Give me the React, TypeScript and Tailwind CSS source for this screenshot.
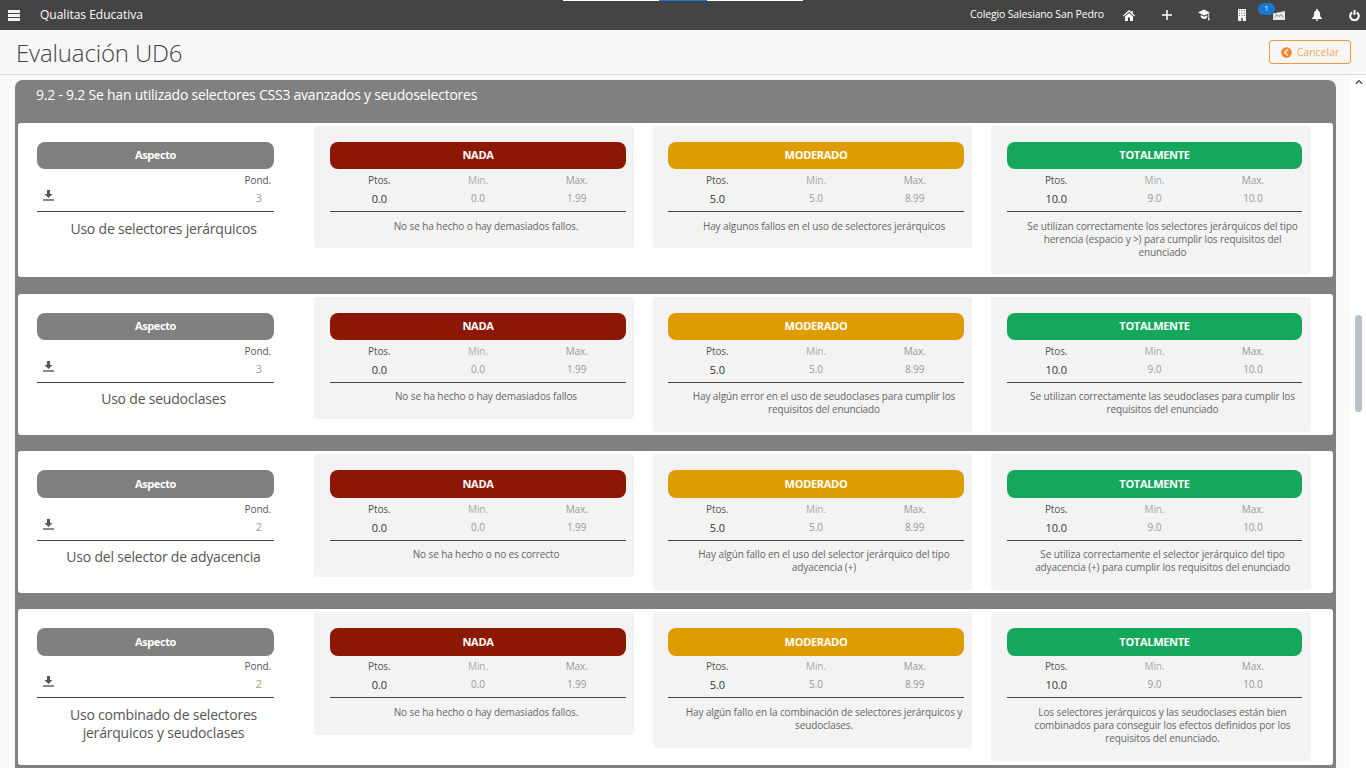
import { FaChevronCircleLeft, FaChevronUp } from "react-icons/fa";

type Level = { pts: string; min: string; max: string; text: string };

type Aspect = {
  name: string;
  pond: string;
  height: string;
  gap: string;
  bar: string;
  row: string;
  desc: string;
  cellPb: string;
  nada: Level;
  moderado: Level;
  totalmente: Level;
};

const nada = (text: string): Level => ({ pts: "0.0", min: "0.0", max: "1.99", text });
const moderado = (text: string): Level => ({ pts: "5.0", min: "5.0", max: "8.99", text });
const totalmente = (text: string): Level => ({ pts: "10.0", min: "9.0", max: "10.0", text });

const aspects: Aspect[] = [
  {
    name: "Uso de selectores jerárquicos",
    pond: "3",
    height: "h-[154px]",
    gap: "mb-[17px]",
    bar: "h-[27px]",
    row: "h-[43px]",
    desc: "mt-2",
    cellPb: "pb-[15px]",
    nada: nada("No se ha hecho o hay demasiados fallos."),
    moderado: moderado("Hay algunos fallos en el uso de selectores jerárquicos"),
    totalmente: totalmente(
      "Se utilizan correctamente los selectores jerárquicos del tipo herencia (espacio y >) para cumplir los requisitos del enunciado"
    ),
  },
  {
    name: "Uso de seudoclases",
    pond: "3",
    height: "h-[141px]",
    gap: "mb-4",
    bar: "h-[27px]",
    row: "h-[43px]",
    desc: "mt-[7px]",
    cellPb: "pb-4",
    nada: nada("No se ha hecho o hay demasiados fallos"),
    moderado: moderado("Hay algún error en el uso de seudoclases para cumplir los requisitos del enunciado"),
    totalmente: totalmente("Se utilizan correctamente las seudoclases para cumplir los requisitos del enunciado"),
  },
  {
    name: "Uso del selector de adyacencia",
    pond: "2",
    height: "h-[142px]",
    gap: "mb-4",
    bar: "h-[28px]",
    row: "h-[43px]",
    desc: "mt-[7px]",
    cellPb: "pb-4",
    nada: nada("No se ha hecho o no es correcto"),
    moderado: moderado("Hay algún fallo en el uso del selector jerárquico del tipo adyacencia (+)"),
    totalmente: totalmente(
      "Se utiliza correctamente el selector jerárquico del tipo adyacencia (+) para cumplir los requisitos del enunciado"
    ),
  },
  {
    name: "Uso combinado de selectores jerárquicos y seudoclases",
    pond: "2",
    height: "h-[156px]",
    gap: "mb-0",
    bar: "h-[28px] -mb-px",
    row: "h-[43px]",
    desc: "mt-2",
    cellPb: "pb-4",
    nada: nada("No se ha hecho o hay demasiados fallos."),
    moderado: moderado("Hay algún fallo en la combinación de selectores jerárquicos y seudoclases."),
    totalmente: totalmente(
      "Los selectores jerárquicos y las seudoclases están bien combinados para conseguir los efectos definidos por los requisitos del enunciado."
    ),
  },
];

function MenuIcon() {
  return (
    <svg viewBox="0 0 12 11" className="w-3 h-[11px]" fill="#f2f2f2">
      <rect width="12" height="3" />
      <rect y="4" width="12" height="3" />
      <rect y="8" width="12" height="3" />
    </svg>
  );
}

function HomeIcon() {
  return (
    <svg viewBox="0 0 12 11" className="w-3 h-[11px]" fill="#fff">
      <path d="M6 0l2.2 2V1h1.6v2.6L12 5.6l-.7.8L6 1.7.7 6.4 0 5.6z" />
      <path d="M2 6.4L6 3l4 3.4V11H7V7.5H5V11H2z" />
    </svg>
  );
}

function PlusIcon() {
  return (
    <svg viewBox="0 0 10 10" className="w-[10px] h-[10px]" fill="#fff">
      <path d="M4.250 0h1.500v4.250H10v1.500H5.750V10h-1.500V5.750H0v-1.500h4.250z" />
    </svg>
  );
}

function CapIcon() {
  return (
    <svg viewBox="0 0 13 12" className="w-[13px] h-3" fill="#fff">
      <path d="M0 3.2L6.5 0 13 3.500 6.800 6.600z" />
      <path d="M3 6l3.800 1.900L10 6.200v2.600C9 10 7.600 10.400 6.400 10.200 5 10 3.800 9.400 3 8.400z" />
      <path d="M11.200 4.700l.9-.5V9l.6 2.600h-2L11.200 9z" />
    </svg>
  );
}

function BuildingIcon() {
  return (
    <svg viewBox="0 0 8 12" className="w-2 h-3">
      <rect width="8" height="12" fill="#f4f4f4" />
      <g fill="#777">
        <rect x="1" y="1" width="1" height="1" />
        <rect x="3.500" y="1" width="1" height="1" />
        <rect x="6" y="1" width="1" height="1" />
        <rect x="1" y="3.500" width="1" height="1" />
        <rect x="3.500" y="3.500" width="1" height="1" />
        <rect x="6" y="3.500" width="1" height="1" />
        <rect x="1" y="6" width="1" height="1" />
        <rect x="3.500" y="6" width="1" height="1" />
        <rect x="6" y="6" width="1" height="1" />
      </g>
      <rect x="3" y="9" width="2" height="3" fill="#777" />
    </svg>
  );
}

function MailIcon() {
  return (
    <svg viewBox="0 0 12 9" className="w-3 h-[9px]">
      <path d="M0 2.500L12 0v9H0z" fill="#e8e8e8" />
      <path d="M1.500 6L4 3.600 6 5.600 8 3.400 10.500 6" fill="none" stroke="#666" strokeWidth="0.8" />
    </svg>
  );
}

function BellIcon() {
  return (
    <svg viewBox="0 0 10 12" className="w-[10px] h-3" fill="#fff">
      <path d="M4.200.6a.8.8 0 011.600 0V1.500C7.400 2 8 3.400 8 5c0 2 .6 3.200 2 4.400V10H0v-.6C1.400 8.200 2 7 2 5c0-1.600.6-3 2.200-3.500z" />
      <path d="M3.700 10.600h2.600a1.300 1.300 0 01-2.600 0z" />
    </svg>
  );
}

function PowerIcon() {
  return (
    <svg viewBox="0 0 11 11" className="w-[11px] h-[11px]" fill="none" stroke="#fff" strokeWidth="2">
      <path d="M3.200 2.300a4.300 4.300 0 104.600 0" />
      <path d="M5.500 0v5" />
    </svg>
  );
}

function SaveIcon() {
  return (
    <svg viewBox="0 0 11 11" className="w-[11px] h-[11px] text-[#555]" fill="currentColor">
      <path d="M4 0h3v4h2.500L5.500 8 1.500 4H4z" />
      <rect x="0" y="9" width="11" height="2" fill="#8a8a8a" />
    </svg>
  );
}

function LevelCell({
  title,
  color,
  level,
  aspect,
  className,
}: {
  title: string;
  color: string;
  level: Level;
  aspect: Aspect;
  className: string;
}) {
  return (
    <div className={`self-start rounded bg-[#f3f3f3] pt-4 ${aspect.cellPb} ${className}`}>
      <div
        className={`rounded-lg flex items-center justify-center text-white text-[11px] font-bold tracking-[-0.3px] ${aspect.bar} ${color}`}
      >
        {title}
      </div>
      <div className={`grid grid-cols-3 border-b border-[#444] text-center text-[10px] tracking-[-0.1px] ${aspect.row}`}>
        <div>
          <div className="mt-1 h-[18px] text-[#555]">Ptos.</div>
          <div className="text-[11px] font-medium text-[#333]">{level.pts}</div>
        </div>
        <div>
          <div className="mt-1 h-[18px] text-[#aaa]">Min.</div>
          <div className="text-[#999]">{level.min}</div>
        </div>
        <div>
          <div className="mt-1 h-[18px] text-[#999]">Max.</div>
          <div className="text-[#999]">{level.max}</div>
        </div>
      </div>
      <p className={`pl-4 text-center text-[10px] leading-[13px] tracking-[-0.11px] text-[#666] ${aspect.desc}`}>
        {level.text}
      </p>
    </div>
  );
}

function AspectCard({ aspect }: { aspect: Aspect }) {
  return (
    <div className={`flex rounded-[3px] bg-white pt-[3px] pl-[19px] ${aspect.height} ${aspect.gap}`}>
      <div className="w-[237px] pt-4 mr-10 shrink-0">
        <div
          className={`rounded-lg bg-[#808080] flex items-center justify-center text-white text-[11px] font-bold tracking-[-0.4px] ${aspect.bar}`}
        >
          Aspecto
        </div>
        <div className={`relative border-b border-[#444] text-[10px] text-right ${aspect.row}`}>
          <div className="pt-1 pr-[3px] h-[21px] text-[#555] tracking-[-0.1px]">Pond.</div>
          <div className="pr-3 text-[11px] leading-4 text-[#a79a90]">{aspect.pond}</div>
          <div className="absolute left-[6px] top-[21px]">
            <SaveIcon />
          </div>
        </div>
        <div className={`pl-4 text-center text-sm leading-[18px] tracking-[-0.2px] text-[#555] ${aspect.desc}`}>
          {aspect.name}
        </div>
      </div>
      <div className="flex gap-[19px]">
        <LevelCell title="NADA" color="bg-[#8c1703]" level={aspect.nada} aspect={aspect} className="w-[320px] pl-4 pr-2" />
        <LevelCell
          title="MODERADO"
          color="bg-[#de9c00]"
          level={aspect.moderado}
          aspect={aspect}
          className="w-[319px] pl-[15px] pr-2"
        />
        <LevelCell
          title="TOTALMENTE"
          color="bg-[#14a85c]"
          level={aspect.totalmente}
          aspect={aspect}
          className="w-[320px] pl-4 pr-[9px]"
        />
      </div>
    </div>
  );
}

export default function App() {
  return (
    <div className="h-[768px] w-[1366px] overflow-hidden bg-[#fafafa] font-['Open_Sans',sans-serif]">
      <header className="relative h-[30px] bg-[#444] flex items-center text-white">
        <div className="absolute top-0 left-[563px] flex h-px">
          <div className="w-24 bg-white" />
          <div className="w-12 bg-[#1976d2]" />
          <div className="w-24 bg-white" />
        </div>
        <div className="ml-2">
          <MenuIcon />
        </div>
        <span className="ml-5 text-xs">Qualitas Educativa</span>
        <span className="ml-auto text-[10.5px] tracking-[-0.15px]">Colegio Salesiano San Pedro</span>
        <div className="flex items-center ml-[19px] mr-[6px] gap-[25.5px]">
          <div className="w-3 flex justify-center"><HomeIcon /></div>
          <div className="w-3 flex justify-center"><PlusIcon /></div>
          <div className="w-3 flex justify-center"><CapIcon /></div>
          <div className="w-3 flex justify-center"><BuildingIcon /></div>
          <div className="relative w-3 flex justify-center">
            <MailIcon />
            <span className="absolute -left-[15px] -top-[8px] w-[17px] h-3 rounded-full bg-[#1976d2] text-center text-[7px] leading-3">
              1
            </span>
          </div>
          <div className="w-3 flex justify-center"><BellIcon /></div>
          <div className="w-3 flex justify-center"><PowerIcon /></div>
        </div>
      </header>

      <div className="h-[45px] bg-[#f7f7f7] border-b border-[#ddd] flex items-center justify-between pl-4 pr-[15px]">
        <h1 className="pt-px text-2xl font-light tracking-[-0.15px] text-[#444]">Evaluación UD6</h1>
        <button className="w-[82px] h-6 rounded-[3px] border border-[#f7963c] text-[#f9a55a] flex items-center justify-center gap-[5px] pt-px text-[10.5px]">
          <FaChevronCircleLeft className="w-[11px] h-[11px] text-[#f7872a]" />
          Cancelar
        </button>
      </div>

      <div className="flex">
        <main className="flex-1 pl-[15px] pr-[15px] pt-[5px]">
          <section className="rounded-t-lg bg-[#808080] px-[3px] h-[700px]">
            <h2 className="pl-[18px] h-[43px] pt-[5px] text-sm font-medium tracking-[-0.23px] text-white">
              9.2 - 9.2 Se han utilizado selectores CSS3 avanzados y seudoselectores
            </h2>
            {aspects.map((aspect) => (
              <AspectCard key={aspect.name} aspect={aspect} />
            ))}
          </section>
        </main>
        <aside className="relative w-[15px] bg-white">
          <FaChevronUp className="absolute left-1 top-[3px] w-2 h-2 text-[#444]" />
          <div className="absolute left-1 top-[240px] w-[7px] h-[97px] rounded-sm bg-[#b8c2cc]" />
        </aside>
      </div>
    </div>
  );
}
